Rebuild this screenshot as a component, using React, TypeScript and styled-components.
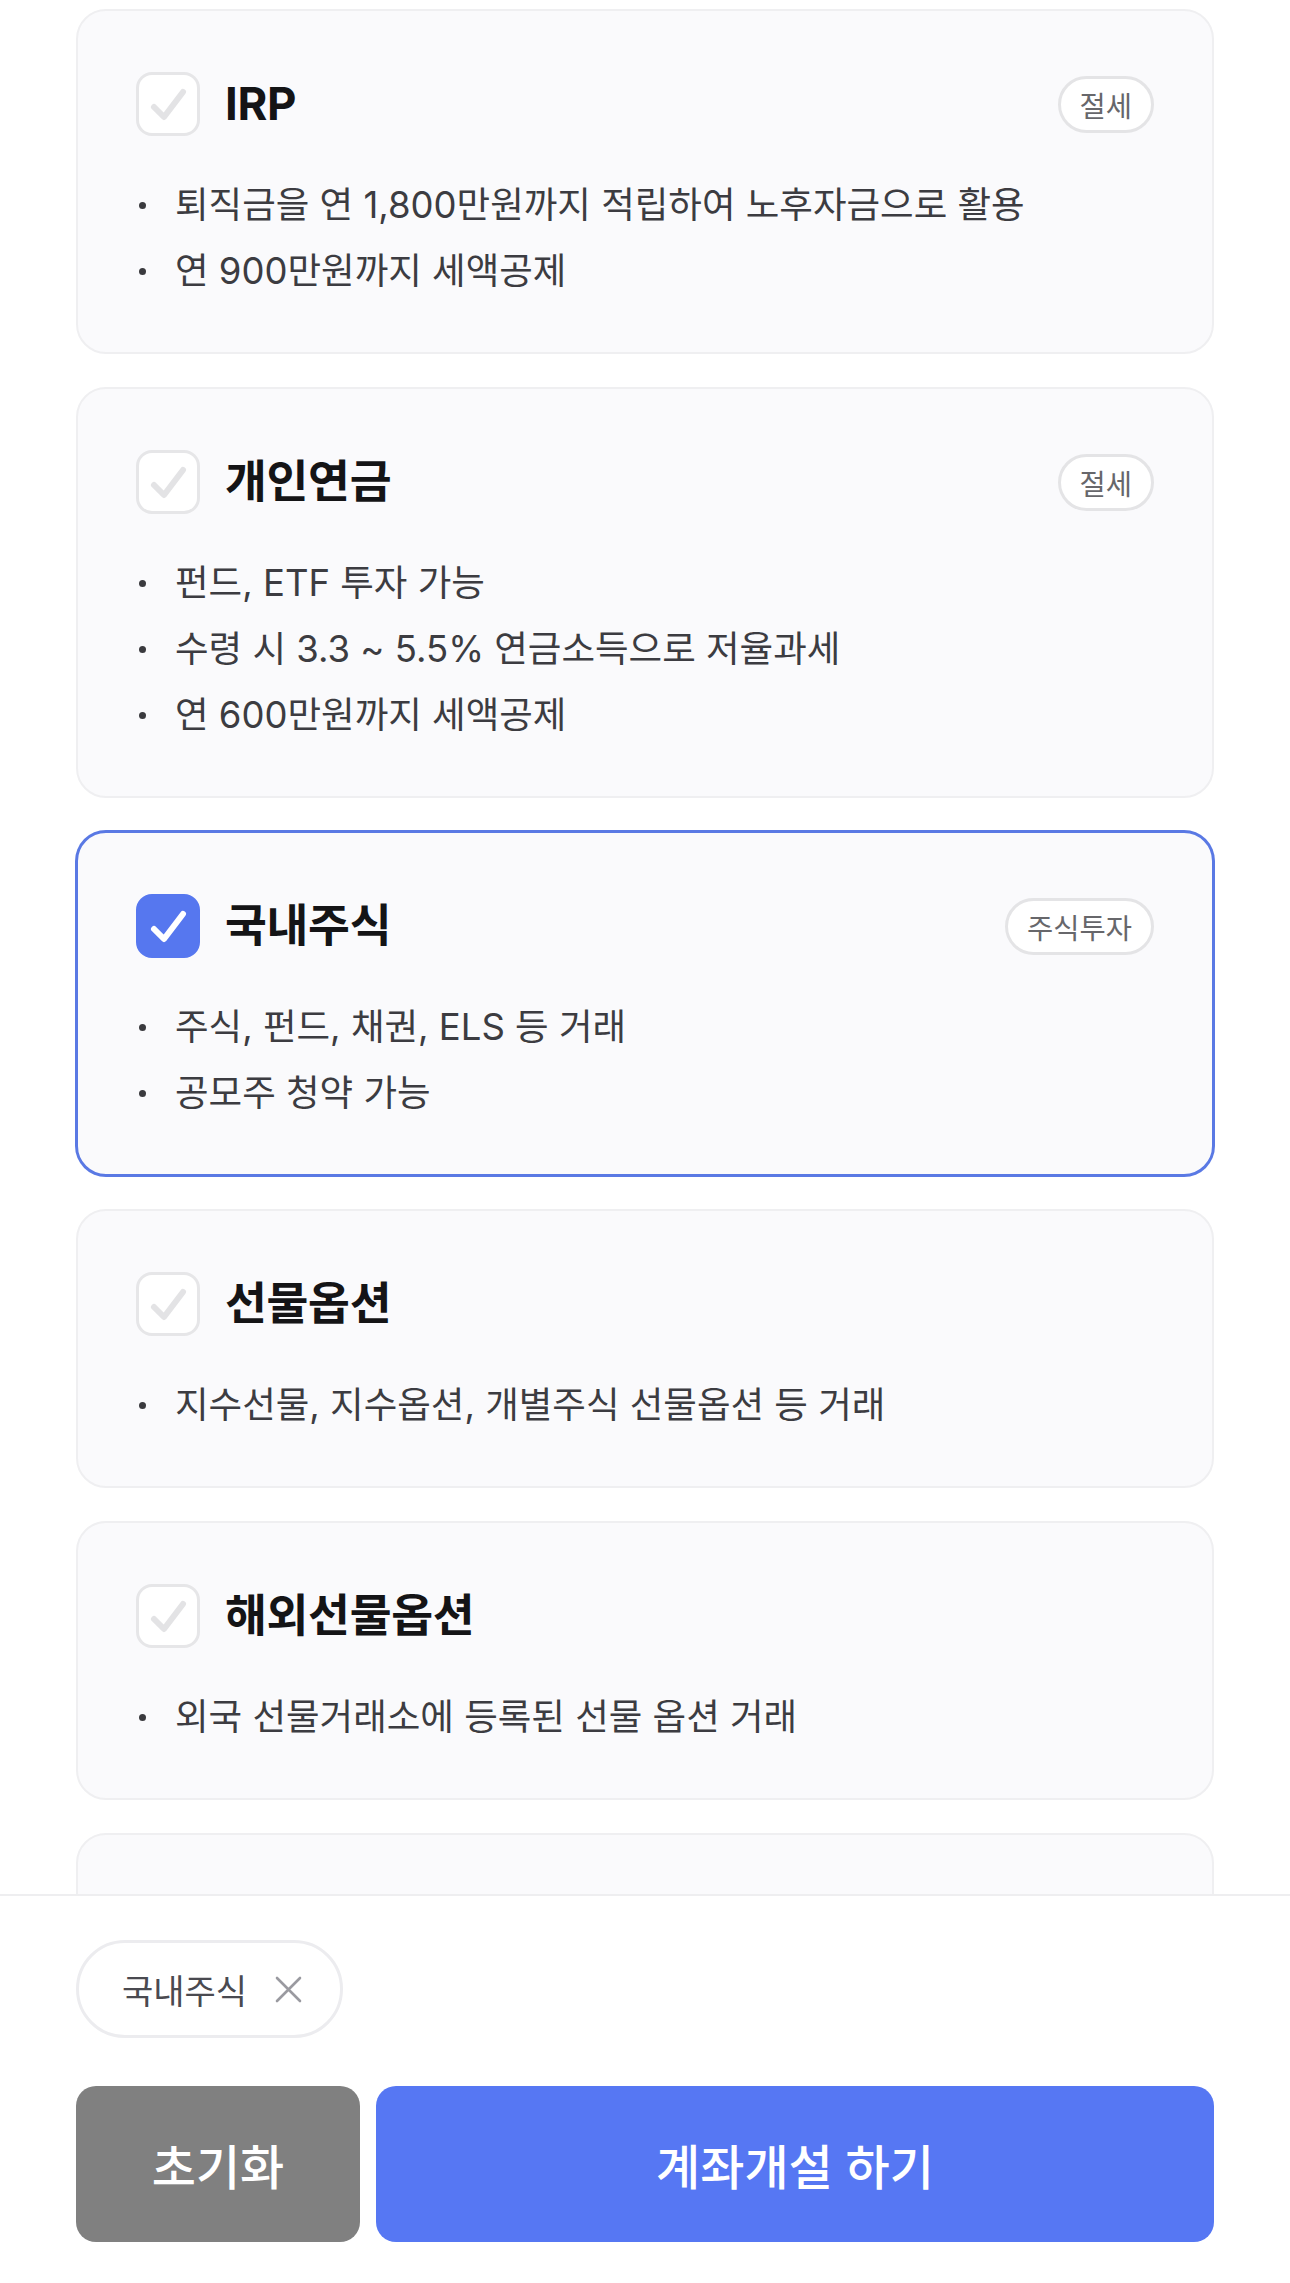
import React from "react";
import styled, { createGlobalStyle, css } from "styled-components";

const GlobalStyle = createGlobalStyle`
  html, body {
    margin: 0;
    padding: 0;
    background: #ffffff;
  }
  body {
    font-family: "Inter", "Noto Sans CJK KR", sans-serif;
    -webkit-font-smoothing: antialiased;
  }
  * { box-sizing: border-box; }
`;

const Page = styled.div`
  width: 1290px;
  height: 2283px;
  display: flex;
  flex-direction: column;
  overflow: hidden;
  background: #ffffff;
`;

const List = styled.div`
  flex: 1;
  min-height: 0;
  overflow: hidden;
  display: flex;
  flex-direction: column;
  gap: 33px;
  padding: 9px 76px 0;
`;

const Card = styled.div<{ $selected?: boolean }>`
  flex-shrink: 0;
  background: #fafafc;
  border: 2px solid #efeff1;
  border-radius: 30px;
  padding: 61px 58px 48px;
  display: flex;
  flex-direction: column;
  gap: 36px;
  ${(p) =>
    p.$selected &&
    css`
      border-color: #5a79e4;
      box-shadow: 0 0 0 1px #5a79e4;
    `}
`;

const PlaceholderCard = styled(Card)`
  height: 279px;
`;

const Header = styled.div`
  display: flex;
  align-items: center;
  height: 64px;
`;

const Box = styled.div<{ $checked?: boolean }>`
  width: 64px;
  height: 64px;
  flex-shrink: 0;
  border-radius: 16px;
  border: 3px solid ${(p) => (p.$checked ? "#5677ef" : "#e6e6e8")};
  background: ${(p) => (p.$checked ? "#5677ef" : "#ffffff")};
  display: flex;
  align-items: center;
  justify-content: center;
`;

const Title = styled.h2`
  margin: 0 0 0 25px;
  font-size: 45.5px;
  font-weight: 700;
  color: #141416;
  letter-spacing: -0.3px;
  line-height: 64px;
`;

const Badge = styled.span`
  margin-left: auto;
  height: 57px;
  padding: 0 19px;
  border-radius: 999px;
  border: 3px solid #e4e4e6;
  background: #ffffff;
  color: #67676b;
  font-size: 28.5px;
  display: flex;
  align-items: center;
`;

const Bullets = styled.ul`
  list-style: none;
  margin: 0;
  padding: 0;
`;

const Bullet = styled.li`
  position: relative;
  padding-left: 39px;
  height: 66px;
  line-height: 66px;
  font-size: 36.5px;
  color: #3c3c41;
  white-space: nowrap;
  &::before {
    content: "";
    position: absolute;
    left: 3px;
    top: 30px;
    width: 7px;
    height: 7px;
    border-radius: 50%;
    background: #3a3a3e;
  }
`;

const Bottom = styled.div`
  flex-shrink: 0;
  border-top: 2px solid #eeeef0;
  background: #ffffff;
  padding: 44px 76px 41px;
  display: flex;
  flex-direction: column;
  gap: 48px;
`;

const ChipRow = styled.div`
  display: flex;
  gap: 16px;
`;

const Chip = styled.div`
  height: 98px;
  padding: 0 38px 0 43px;
  border: 3px solid #ececef;
  border-radius: 999px;
  background: #ffffff;
  display: flex;
  align-items: center;
  gap: 28px;
  font-size: 34px;
  color: #4a4a50;
`;

const Buttons = styled.div`
  display: flex;
  gap: 16px;
  height: 156px;
`;

const Button = styled.button<{ $primary?: boolean }>`
  border: none;
  border-radius: 20px;
  font-family: inherit;
  font-size: 48px;
  font-weight: 500;
  color: #ffffff;
  cursor: pointer;
  ${(p) =>
    p.$primary
      ? css`
          flex: 1;
          background: #5677f3;
        `
      : css`
          width: 284px;
          background: #808080;
        `}
`;

const CheckMark = ({ color }: { color: string }) => (
  <svg width="64" height="64" viewBox="0 0 64 64" style={{ margin: -3 }}>
    <polyline
      points="18,35 28,45 47,20"
      fill="none"
      stroke={color}
      strokeWidth="6"
      strokeLinecap="round"
      strokeLinejoin="round"
    />
  </svg>
);

type Item = {
  title: string;
  badge?: string;
  bullets: string[];
  selected?: boolean;
};

const items: Item[] = [
  {
    title: "IRP",
    badge: "절세",
    bullets: ["퇴직금을 연 1,800만원까지 적립하여 노후자금으로 활용", "연 900만원까지 세액공제"],
  },
  {
    title: "개인연금",
    badge: "절세",
    bullets: ["펀드, ETF 투자 가능", "수령 시 3.3 ~ 5.5% 연금소득으로 저율과세", "연 600만원까지 세액공제"],
  },
  {
    title: "국내주식",
    badge: "주식투자",
    bullets: ["주식, 펀드, 채권, ELS 등 거래", "공모주 청약 가능"],
    selected: true,
  },
  {
    title: "선물옵션",
    bullets: ["지수선물, 지수옵션, 개별주식 선물옵션 등 거래"],
  },
  {
    title: "해외선물옵션",
    bullets: ["외국 선물거래소에 등록된 선물 옵션 거래"],
  },
];

export default function App() {
  return (
    <Page>
      <GlobalStyle />
      <List>
        {items.map((it) => (
          <Card key={it.title} $selected={it.selected}>
            <Header>
              <Box $checked={it.selected}>
                <CheckMark color={it.selected ? "#ffffff" : "#e3e3e5"} />
              </Box>
              <Title>{it.title}</Title>
              {it.badge && <Badge>{it.badge}</Badge>}
            </Header>
            <Bullets>
              {it.bullets.map((b) => (
                <Bullet key={b}>{b}</Bullet>
              ))}
            </Bullets>
          </Card>
        ))}
        <PlaceholderCard aria-hidden="true" />
      </List>
      <Bottom>
        <ChipRow>
          <Chip>
            국내주식
            <svg width="27" height="27" viewBox="0 0 27 27">
              <path d="M2 2 L25 25 M25 2 L2 25" stroke="#9a9aa0" strokeWidth="2.6" strokeLinecap="round" />
            </svg>
          </Chip>
        </ChipRow>
        <Buttons>
          <Button>초기화</Button>
          <Button $primary>계좌개설 하기</Button>
        </Buttons>
      </Bottom>
    </Page>
  );
}
